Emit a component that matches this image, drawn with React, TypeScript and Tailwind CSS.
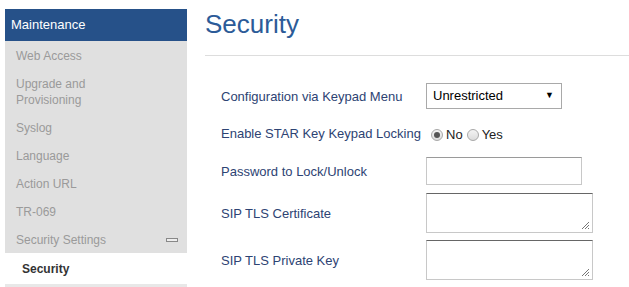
import React from "react";

const MENU = [
  "Web Access",
  "Upgrade and Provisioning",
  "Syslog",
  "Language",
  "Action URL",
  "TR-069",
];

function Sidebar() {
  return (
    <div className="w-[182px] shrink-0 mt-[9px] ml-[5px]">
      <div className="h-[32px] bg-[#265189] text-white text-[13px] flex items-center pl-[6px]">
        Maintenance
      </div>
      <div className="bg-[#e0e0e0]">
        {MENU.map((m) => (
          <div
            key={m}
            className="px-[11px] pt-[7px] pb-[5px] text-[12px] leading-[16px] text-[#9a9a9a] w-[110px]"
          >
            {m}
          </div>
        ))}
        <div className="px-[11px] pt-[7px] pb-[5px] text-[12px] leading-[16px] text-[#9a9a9a] flex items-center justify-between">
          <span>Security Settings</span>
          <span className="w-[12px] h-[4px] border border-[#888] bg-[#eee] mr-[-2px]" />
        </div>
      </div>
      <div className="bg-white h-[31px] pl-[17px] flex items-center text-[12px] font-bold text-[#333]">
        Security
      </div>
      <div className="bg-[#e8e8e8] h-[4px]" />
    </div>
  );
}

function Label({ children }: { children: React.ReactNode }) {
  return (
    <div className="w-[205px] shrink-0 text-[13px] text-[#2d4373] relative top-[1px]">{children}</div>
  );
}

function Radio({ checked }: { checked?: boolean }) {
  return (
    <span className="w-[12px] h-[12px] rounded-full border border-[#a8a8a8] bg-gradient-to-b from-[#f4f4f4] to-[#dcdcdc] flex items-center justify-center">
      {checked && <span className="w-[6px] h-[6px] rounded-full bg-[#555]" />}
    </span>
  );
}

function Grip() {
  return (
    <svg className="absolute right-[2px] bottom-[2px]" width="9" height="9" viewBox="0 0 9 9">
      <path d="M8 1 L1 8 M8 4 L4 8 M8 7 L7 8" stroke="#777" strokeWidth="1" />
    </svg>
  );
}

export default function App() {
  return (
    <div className="w-[629px] h-[287px] overflow-hidden bg-white flex font-['Liberation_Sans',Arial,sans-serif]">
      <Sidebar />
      <div className="flex-1 pl-[18px]">
        <h1 className="text-[26px] leading-[30px] text-[#2c5b98] mt-[9px]">Security</h1>
        <div className="h-px bg-[#dddddd] mt-[16px]" />
        <div className="pl-[16px]">
          <div className="flex items-center mt-[27px] h-[26px]">
            <Label>Configuration via Keypad Menu</Label>
            <div className="w-[136px] h-[26px] border border-[#a9a9a9] flex items-center justify-between pl-[6px] pr-[7px] text-[13px] text-black">
              <span>Unrestricted</span>
              <span className="text-[9px]">▼</span>
            </div>
          </div>
          <div className="flex items-center mt-[12px] h-[24px]">
            <Label>Enable STAR Key Keypad Locking</Label>
            <div className="flex items-center text-[13px] text-[#222] pl-[5px] pt-[3px]">
              <Radio checked />
              <span className="ml-[3px]">No</span>
              <span className="ml-[4px]"><Radio /></span>
              <span className="ml-[3px]">Yes</span>
            </div>
          </div>
          <div className="flex items-center mt-[12px] h-[28px]">
            <Label>Password to Lock/Unlock</Label>
            <div className="w-[156px] h-[28px] border border-[#c8c8c8] border-t-[#9a9a9a]" />
          </div>
          <div className="flex items-center mt-[8px] h-[40px]">
            <Label>SIP TLS Certificate</Label>
            <div className="relative w-[167px] h-[40px] border border-[#c8c8c8] border-t-[#666]">
              <Grip />
            </div>
          </div>
          <div className="flex items-center mt-[7px] h-[40px]">
            <Label>SIP TLS Private Key</Label>
            <div className="relative w-[167px] h-[40px] border border-[#c8c8c8] border-t-[#666]">
              <Grip />
            </div>
          </div>
        </div>
      </div>
    </div>
  );
}
